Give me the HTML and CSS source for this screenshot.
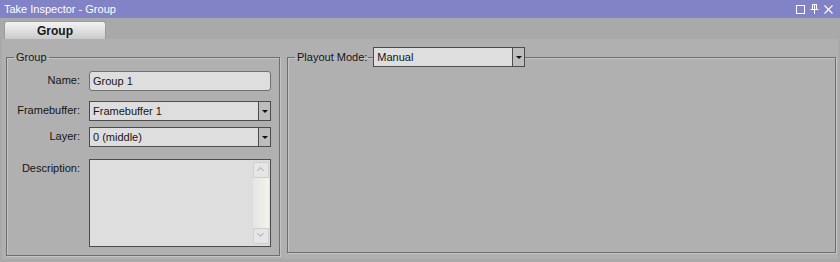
FILE: index.html
```html
<!DOCTYPE html>
<html>
<head>
    <meta name="viewport" content="width=device-width, initial-scale=1.0">
    <link rel="stylesheet" href="styles.css">
</head>
<body>
    <div class="window">
        <div class="titlebar">
            <span class="title">Take Inspector - Group</span>
            <div class="title-buttons">
                <svg width="9" height="9" viewBox="0 0 9 9"><rect x="0.5" y="0.5" width="8" height="8" fill="none" stroke="#fff" stroke-width="1"/></svg>
                <svg width="9" height="10" viewBox="0 0 9 10"><path d="M2 0.5h5M2.5 0.5v5M6.5 0.5v5M4.5 0.5v5M0.5 5.5h8M4.5 5.5v4.5" stroke="#fff" stroke-width="1" fill="none"/></svg>
                <svg width="9" height="9" viewBox="0 0 9 9"><path d="M0.5 0.5L8.5 8.5M8.5 0.5L0.5 8.5" stroke="#fff" stroke-width="1.1"/></svg>
            </div>
        </div>
        <div class="tabs">
            <div class="tab">Group</div>
        </div>
        <div class="page">
            <fieldset class="group left">
                <legend>Group</legend>
                <div class="row">
                    <label>Name:</label>
                    <div class="input">Group 1</div>
                </div>
                <div class="row close">
                    <label>Framebuffer:</label>
                    <div class="select"><span>Framebuffer 1</span><div class="drop"></div></div>
                </div>
                <div class="row spaced">
                    <label>Layer:</label>
                    <div class="select"><span>0 (middle)</span><div class="drop"></div></div>
                </div>
                <div class="row desc">
                    <label>Description:</label>
                    <div class="textarea">
                        <div class="scroll">
                            <div class="arrow up"></div>
                            <div class="arrow down"></div>
                        </div>
                    </div>
                </div>
            </fieldset>
            <fieldset class="group right">
                <legend>
                    <span>Playout Mode:</span>
                    <span class="dash"></span>
                    <div class="select mode"><span>Manual</span><div class="drop"></div></div>
                </legend>
            </fieldset>
        </div>
    </div>
</body>
</html>
```

FILE: styles.css
```css
body {
    margin: 0;
    background-color: #a9a9a9;
    font-family: "Liberation Sans", Arial, sans-serif;
    font-size: 11px;
    color: #151515;
}

.window {
    width: 840px;
    height: 262px;
    display: flex;
    flex-direction: column;
}

.titlebar {
    height: 18px;
    background-color: #8282c6;
    color: #fff;
    display: flex;
    align-items: center;
    justify-content: space-between;
    padding: 0 7px 0 4px;
    box-sizing: border-box;
}

.title {
    font-size: 11px;
}

.title-buttons {
    display: flex;
    gap: 5px;
    align-items: center;
}

.tabs {
    display: flex;
    padding: 3px 0 0 4px;
}

.tab {
    width: 102px;
    height: 18px;
    box-sizing: border-box;
    border: 1px solid #9c9c9c;
    border-bottom: none;
    border-radius: 3px 3px 0 0;
    background: linear-gradient(#f4f4f4, #cacaca);
    font-size: 12px;
    font-weight: bold;
    text-align: center;
    line-height: 18px;
}

.page {
    flex: 1;
    background-color: #b0b0b0;
    margin: 0 2px 3px 2px;
    padding: 8px 2px 3px 4px;
    display: flex;
    gap: 7px;
}

.group {
    margin: 0;
    border: 1px solid #6e6e6e;
    box-shadow: inset 1px 1px 0 #c4c4c4, 1px 1px 0 #c4c4c4;
    padding: 4px 0 0 0;
    min-width: 0;
}

.group legend {
    line-height: 20px;
    height: 20px;
    padding: 0 2px;
    margin-left: 7px;
}

.left {
    width: 274px;
    box-sizing: border-box;
}

.right {
    flex: 1;
    margin-bottom: 3px;
}

.right legend {
    display: flex;
    align-items: center;
    padding: 0 0 0 2px;
}

.dash {
    width: 5px;
    height: 1px;
    background-color: #6e6e6e;
    margin-left: 1px;
}

.row {
    display: flex;
    align-items: flex-start;
    margin-bottom: 10px;
}

.row.close {
    margin-bottom: 6px;
}

.row.spaced {
    margin-bottom: 12px;
}

.row label {
    width: 73px;
    text-align: right;
    padding-top: 3px;
    margin-right: 9px;
}

.input, .select, .textarea {
    width: 182px;
    height: 20px;
    box-sizing: border-box;
    border: 1px solid #4c4c4c;
    background-color: #dedede;
    line-height: 18px;
    padding-left: 3px;
}

.input {
    border-color: #707070;
    border-radius: 3px;
}

.select {
    display: flex;
    padding-right: 0;
    line-height: 18px;
}

.select span {
    flex: 1;
}

.drop {
    width: 11px;
    border-left: 1px solid #4c4c4c;
    background-color: #bdbdbd;
    position: relative;
}

.drop::after {
    content: "";
    position: absolute;
    left: 3px;
    top: 8px;
    border-left: 3px solid transparent;
    border-right: 3px solid transparent;
    border-top: 3px solid #111;
}

.select.mode {
    width: 152px;
}

.row.desc {
    margin-bottom: 0;
}

.row.desc label {
    padding-top: 3px;
}

.textarea {
    height: 88px;
    display: flex;
    justify-content: flex-end;
    padding: 0;
}

.scroll {
    width: 16px;
    margin: 2px 1px 2px 0;
    background: linear-gradient(90deg, #e4e4e4, #f4f4ec);
    display: flex;
    flex-direction: column;
    justify-content: space-between;
}

.arrow {
    height: 16px;
    border: 1px solid #cfcfcf;
    box-sizing: border-box;
    background-color: #e6e6e6;
    position: relative;
}

.arrow::after {
    content: "";
    position: absolute;
    left: 4px;
    width: 4px;
    height: 4px;
    border-left: 1px solid #b4b4b4;
    border-top: 1px solid #b4b4b4;
}

.arrow.up::after {
    top: 5px;
    transform: rotate(45deg);
}

.arrow.down::after {
    top: 2px;
    transform: rotate(225deg);
}
```
